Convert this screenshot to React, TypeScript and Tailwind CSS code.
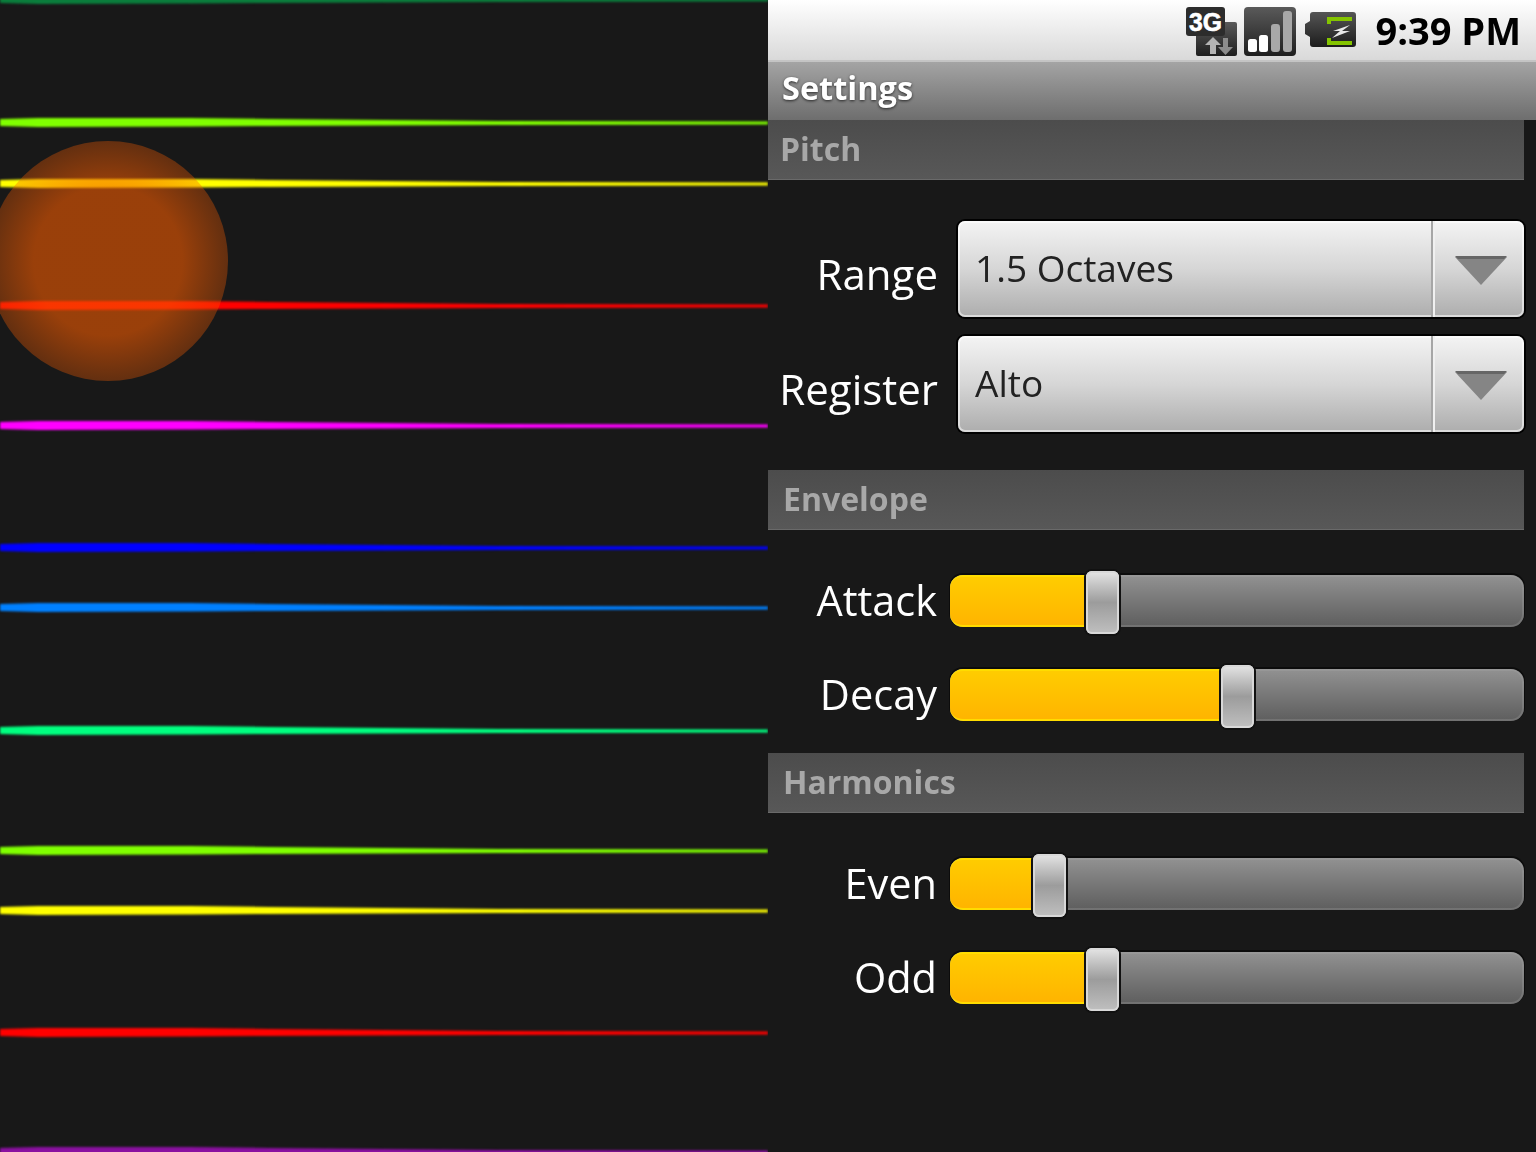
const font = { fontFamily: '"Open Sans", "Noto Sans", sans-serif' };

const LINES = [
  { y: -1, color: "#0a7d3c" },
  { y: 122, color: "#80ff00" },
  { y: 183, color: "#ffff00" },
  { y: 305, color: "#ff0000" },
  { y: 425, color: "#ff00ff" },
  { y: 547, color: "#0000ff" },
  { y: 607, color: "#0080ff" },
  { y: 730, color: "#00ff80" },
  { y: 850, color: "#80ff00" },
  { y: 910, color: "#ffff00" },
  { y: 1032, color: "#ff0000" },
  { y: 1151, color: "#8a10a0" },
];

function StringCanvas() {
  return (
    <svg width="768" height="1152" viewBox="0 0 768 1152" className="block shrink-0">
      <defs>
        <radialGradient id="ball">
          <stop offset="0%" stopColor="#f65c00" stopOpacity="0.585" />
          <stop offset="62%" stopColor="#f65c00" stopOpacity="0.585" />
          <stop offset="100%" stopColor="#f65c00" stopOpacity="0.34" />
        </radialGradient>
      </defs>
      {LINES.map((line) => (
        <polygon
          key={line.y}
          fill={line.color}
          className="blur-[0.8px]"
          points={`0,${line.y - 3} 38,${line.y - 4} 190,${line.y - 4} 270,${line.y - 3} 500,${line.y - 1} 768,${line.y - 0.5} 768,${line.y + 2.5} 500,${line.y + 3} 270,${line.y + 4} 190,${line.y + 4.5} 38,${line.y + 5} 0,${line.y + 4}`}
        />
      ))}
      <circle cx="108" cy="261" r="120" fill="url(#ball)" />
    </svg>
  );
}

function StatusIcons() {
  return (
    <svg width="176" height="56" viewBox="0 0 176 56" className="block">
      <defs>
        <linearGradient id="bat" x1="0" y1="0" x2="0" y2="1">
          <stop offset="0%" stopColor="#555" />
          <stop offset="100%" stopColor="#1c1c1c" />
        </linearGradient>
        <linearGradient id="sig" x1="0" y1="0" x2="0" y2="1">
          <stop offset="0%" stopColor="#5a5a5a" />
          <stop offset="100%" stopColor="#1e1e1e" />
        </linearGradient>
      </defs>
      {/* 3G data */}
      <path d="M11 20h39a2 2 0 0 1 2 2v30a2 2 0 0 1-2 2H13a2 2 0 0 1-2-2z" fill="url(#sig)" />
      <rect x="1" y="5" width="39" height="29" rx="3" fill="#2c2c2c" />
      <text x="4" y="29" fontFamily="Liberation Sans, sans-serif" fontWeight="700" fontSize="25" fill="#fff" stroke="#fff" strokeWidth="0.6" textLength="33" lengthAdjust="spacingAndGlyphs">3G</text>
      <path d="M25 52V43h-5l8-8 8 8h-5v9z" fill="#b4b4b4" />
      <path d="M38 36h5v9h5l-7.500 8-7.500-8h5z" fill="#8c8c8c" />
      {/* signal */}
      <rect x="59" y="5" width="52" height="49" rx="4" fill="url(#sig)" />
      <rect x="63" y="37" width="9" height="13" rx="2.500" fill="#fff" />
      <rect x="74" y="33" width="9" height="17" rx="2.500" fill="#fff" />
      <rect x="86" y="22" width="9" height="28" rx="3" fill="#a8a8a8" />
      <rect x="98" y="9" width="9" height="41" rx="3" fill="#a8a8a8" />
      {/* battery */}
      <path d="M128 10h40a3 3 0 0 1 3 3v29a3 3 0 0 1-3 3h-40a3 3 0 0 1-3-3v-7l-5-3v-10l5-3v-6a3 3 0 0 1 3-3z" fill="url(#bat)" />
      <path d="M142 15h25v4h-25zM142 39h25v4h-25z" fill="#84c400" />
      <path d="M142 15h4v7h-4zM142 36h4v7h-4z" fill="#84c400" />
      <path d="M165 23l-17 6h7l-8 7 18-7h-8z" fill="#e8e8e8" />
    </svg>
  );
}

function SectionHeader({ title, className }: { title: string; className?: string }) {
  return (
    <div className={`flex h-[60px] w-[756px] items-center bg-linear-to-b from-[#4c4c4c] to-[#585858] shadow-[inset_0_-1px_0_#6a6a6a] ${className ?? ""}`}>
      <span className="pb-[3px] text-[32px] leading-none font-bold text-[#a8a8a8]">{title}</span>
    </div>
  );
}

function Spinner({ label, value, className }: { label: string; value: string; className?: string }) {
  return (
    <div className={`flex h-[96px] items-center ${className ?? ""}`}>
      <span className="w-[170px] pt-[9px] text-right text-[42px] leading-none text-white">{label}</span>
      <div className="ml-5 flex h-[96px] w-[566px] rounded-[7px] bg-linear-to-b from-[#f4f4f4] via-[#d6d6d6] to-[#adadad] shadow-[inset_0_0_0_2px_rgba(255,255,255,0.55),0_0_0_2px_#000]">
        <div className="flex flex-1 items-center pb-[3px] pl-[17px] text-[37px] leading-none text-[#222]">{value}</div>
        <div className="flex w-[93px] items-center justify-center border-l-2 border-[#a6a6a6] shadow-[inset_2px_0_0_#f0f0f0]">
          <svg width="54" height="32" viewBox="0 0 54 32" className="mt-1 ml-1 block">
            <path d="M1 2h52L27 30z" fill="#858585" />
            <path d="M1 1h52l-3 3H4z" fill="#666" />
          </svg>
        </div>
      </div>
    </div>
  );
}

function Slider({ label, value, className }: { label: string; value: number; className?: string }) {
  return (
    <div className={`flex h-[52px] items-center ${className ?? ""}`}>
      <span className="w-[169px] text-right text-[41.500px] leading-none text-white">{label}</span>
      <div className="relative ml-[13px] h-[52px] w-[574px] rounded-[13px] bg-linear-to-b from-[#929292] to-[#5e5e5e] shadow-[inset_0_0_0_2px_rgba(170,170,170,0.25),0_-1px_0_1px_#0c0c0c]">
        <div
          className="h-full rounded-l-[13px] border-y-2 border-[#ffdc00] bg-linear-to-b from-[#ffcc00] to-[#ffb400]"
          style={{ width: value }}
        />
        <div
          className="absolute top-[-4px] h-[63px] w-[33px] rounded-[6px] bg-linear-to-b from-[#e6e6e6] via-[#9c9c9c] to-[#c0c0c0] shadow-[inset_0_0_0_2px_#d8d8d8,0_0_0_2px_#111]"
          style={{ left: value }}
        />
      </div>
    </div>
  );
}

export default function App() {
  return (
    <div className="flex h-[1152px] w-[1536px] overflow-hidden bg-[#181818]" style={font}>
      <StringCanvas />
      <div className="flex w-[768px] flex-col blur-[0.5px]">
        <div className="flex h-[60px] items-center justify-end bg-linear-to-b from-white to-[#d9d9d9] pr-[15px]">
          <StatusIcons />
          <span className="ml-[14px] text-[38px] leading-none font-bold text-black">9:39 PM</span>
        </div>
        <div className="flex h-[60px] items-center bg-linear-to-b from-[#a6a6a6] to-[#6e6e6e] pl-[14px] shadow-[inset_0_2px_0_#c4c4c4]">
          <span className="pb-1 text-[32.500px] leading-none font-bold text-white [text-shadow:0_1px_3px_rgba(0,0,0,0.7)]">Settings</span>
        </div>
        <SectionHeader title="Pitch" className="pl-[12px]" />
        <Spinner label="Range" value="1.5 Octaves" className="mt-[41px]" />
        <Spinner label="Register" value="Alto" className="mt-[19px]" />
        <SectionHeader title="Envelope" className="mt-[38px] pl-[15px]" />
        <Slider label="Attack" value={136} className="mt-[45px]" />
        <Slider label="Decay" value={271} className="mt-[42px]" />
        <SectionHeader title="Harmonics" className="mt-[32px] pl-[15px]" />
        <Slider label="Even" value={83} className="mt-[45px]" />
        <Slider label="Odd" value={136} className="mt-[42px]" />
      </div>
    </div>
  );
}
